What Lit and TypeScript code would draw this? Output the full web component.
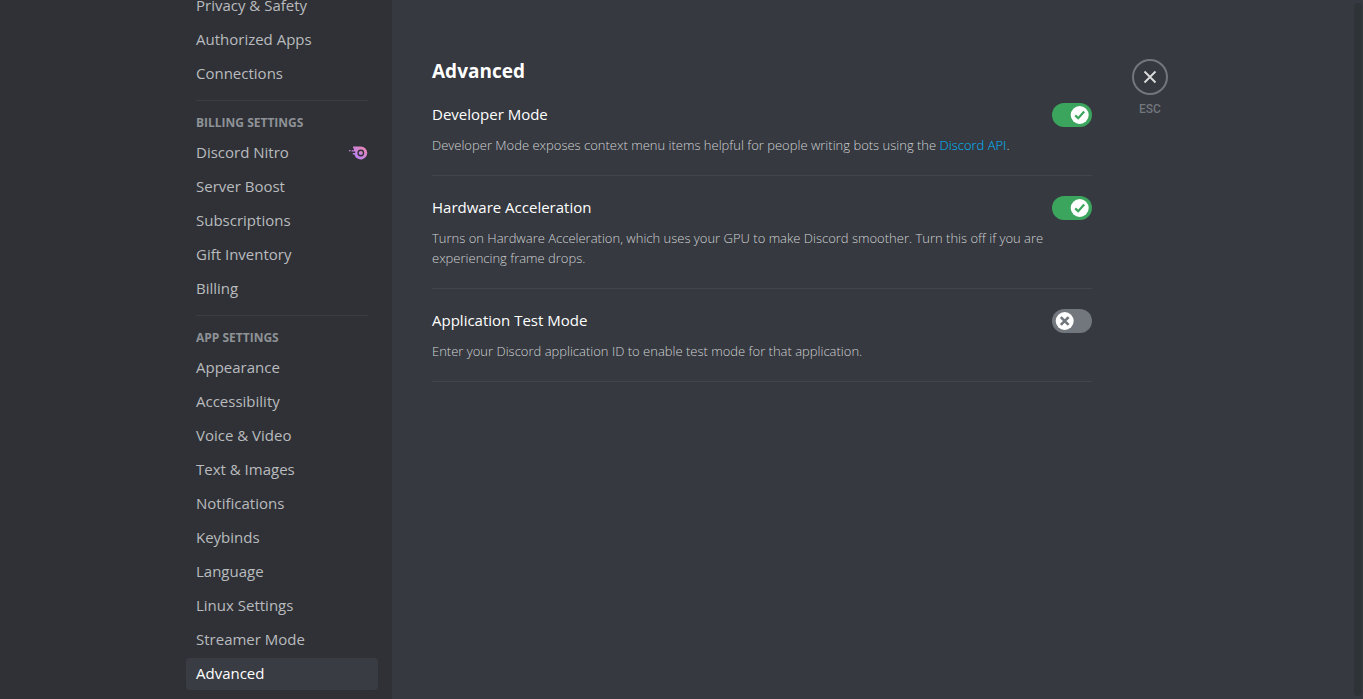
import { LitElement, html, css, svg, nothing } from "lit";
import { customElement, property, state } from "lit/decorators.js";

interface NavGroup {
  title?: string;
  items: string[];
}

interface Setting {
  id: string;
  title: string;
  note: unknown;
  on: boolean;
}

const NAV: NavGroup[] = [
  { items: ["Privacy & Safety", "Authorized Apps", "Connections"] },
  {
    title: "Billing Settings",
    items: ["Discord Nitro", "Server Boost", "Subscriptions", "Gift Inventory", "Billing"],
  },
  {
    title: "App Settings",
    items: [
      "Appearance",
      "Accessibility",
      "Voice & Video",
      "Text & Images",
      "Notifications",
      "Keybinds",
      "Language",
      "Linux Settings",
      "Streamer Mode",
      "Advanced",
    ],
  },
];

const nitroIcon = html`<svg width="19" height="16" viewBox="0 -2 19 16" aria-hidden="true">
  <defs>
    <linearGradient id="nitro" x1="0" y1="1" x2="1" y2="0">
      <stop offset="0.2" stop-color="#b980f0" />
      <stop offset="0.9" stop-color="#e885b4" />
    </linearGradient>
  </defs>
  <g fill="url(#nitro)">
    <path
      fill-rule="evenodd"
      d="M4 0.5H11.8A6.5 6.5 0 1 1 5.4 8.4H3.8V7H6.2V5.6H2.6V4.2H5V2.4H4ZM11.8 3.6A3.4 3.4 0 1 0 11.8 10.4A3.4 3.4 0 1 0 11.8 3.6Z"
    />
    <circle cx="11.8" cy="7" r="2.1" />
    <rect x="0" y="4" width="1.4" height="1.4" />
  </g>
</svg>`;

@customElement("toggle-switch")
export class ToggleSwitch extends LitElement {
  @property({ type: Boolean }) checked = false;
  @property() label = "";

  static styles = css`
    :host {
      display: block;
      flex: none;
    }
    .switch {
      display: grid;
      width: 40px;
      height: 24px;
      cursor: pointer;
    }
    .track,
    .knob {
      grid-area: 1 / 1;
    }
    .track {
      appearance: none;
      width: 40px;
      height: 24px;
      margin: 0;
      border-radius: 12px;
      background: #72767d;
      cursor: pointer;
    }
    .track:checked {
      background: #3ba55d;
    }
    .track:focus-visible {
      outline: 2px solid #00aff4;
      outline-offset: 2px;
    }
    .knob {
      z-index: 1;
      width: 20px;
      height: 20px;
      align-self: center;
      margin-left: 3px;
      pointer-events: none;
      color: #72767d;
    }
    .track:checked + .knob {
      margin-left: 18px;
      color: #3ba55d;
    }
  `;

  private toggle(e: Event) {
    this.checked = (e.target as HTMLInputElement).checked;
  }

  render() {
    return html`<label class="switch">
      <input
        class="track"
        type="checkbox"
        role="switch"
        aria-label=${this.label}
        .checked=${this.checked}
        @change=${this.toggle}
      />
      <svg class="knob" viewBox="0 0 20 20" aria-hidden="true">
        <circle cx="9.7" cy="10" r="9" fill="#fff" />
        ${this.checked
          ? svg`<path d="M5.2 10.4L8.2 13.2L14.2 6.6" fill="none" stroke="currentColor" stroke-width="2.2" />`
          : svg`<path d="M5.8 6.1L13.6 13.9M13.6 6.1L5.8 13.9" fill="none" stroke="currentColor" stroke-width="2.6" />`}
      </svg>
    </label>`;
  }
}

@customElement("app-root")
export class AppRoot extends LitElement {
  @state() private selected = "Advanced";

  private settings: Setting[] = [
    {
      id: "developer",
      title: "Developer Mode",
      note: html`Developer Mode exposes context menu items helpful for people writing bots using the
        <a class="link" href="#api">Discord API</a>.`,
      on: true,
    },
    {
      id: "hardware",
      title: "Hardware Acceleration",
      note: "Turns on Hardware Acceleration, which uses your GPU to make Discord smoother. Turn this off if you are experiencing frame drops.",
      on: true,
    },
    {
      id: "test",
      title: "Application Test Mode",
      note: "Enter your Discord application ID to enable test mode for that application.",
      on: false,
    },
  ];

  static styles = css`
    :host {
      display: grid;
      grid-template-columns: minmax(218px, 392fr) minmax(0, 971fr);
      height: 100vh;
      overflow: hidden;
      background: #36393f;
      color: #fff;
      font-family: "Open Sans", "Noto Sans", sans-serif;
      font-size: 15px;
      line-height: 20px;
    }
    .sidebar {
      display: flex;
      flex-direction: column;
      justify-content: flex-end;
      align-items: flex-end;
      box-sizing: border-box;
      min-height: 0;
      overflow: hidden;
      padding: 0 14px 9px;
      background: #2f3136;
    }
    .group {
      display: flex;
      flex: none;
      flex-direction: column;
      gap: 2px;
      width: 192px;
    }
    .group + .group::before {
      content: "";
      height: 1px;
      margin: 10px 10px 6px;
      background: #3b3d43;
    }
    .heading {
      margin: 0 0 -2px;
      padding: 6px 10px;
      color: #8e9297;
      font-size: 12px;
      font-weight: 700;
      line-height: 16px;
      text-transform: uppercase;
    }
    .item {
      display: flex;
      align-items: center;
      justify-content: space-between;
      padding: 5px 10px 7px;
      border: 0;
      border-radius: 4px;
      background: none;
      color: #b9bbbe;
      font: inherit;
      text-align: left;
      cursor: pointer;
    }
    .item[aria-current="page"] {
      background: #393c43;
      color: #fff;
    }
    .content {
      display: flex;
      align-items: flex-start;
      justify-content: space-between;
      min-width: 0;
    }
    .page {
      flex: 0 1 660px;
      min-width: 0;
      padding: 59px 40px 80px;
    }
    .title {
      margin: 0 0 20px;
      font-size: 19px;
      font-weight: 700;
      line-height: 24px;
    }
    .setting {
      padding-bottom: 20px;
      margin-bottom: 20px;
      border-bottom: 1px solid #42454b;
    }
    .row {
      display: flex;
      justify-content: space-between;
    }
    .name {
      margin: 0;
      font-size: 15px;
      font-weight: 400;
      line-height: 22px;
    }
    .note {
      margin: 8px 0 0;
      max-width: 620px;
      color: #cfd1d4;
      font-size: 13px;
      font-weight: 300;
    }
    .link {
      color: #00bcff;
      text-decoration: none;
    }
    .tools {
      flex: none;
      margin-right: auto;
      padding-top: 59px;
    }
    .close {
      display: grid;
      justify-items: center;
      gap: 4px;
      padding: 0;
      border: 0;
      background: none;
      color: #72767d;
      font: inherit;
      font-family: Roboto, sans-serif;
      font-size: 12px;
      font-weight: 500;
      cursor: pointer;
    }
    .scrollbar {
      align-self: stretch;
      width: 8px;
      margin: 3px 1px 3px 0;
      border-radius: 4px;
      background: #2e3338;
    }
  `;

  render() {
    return html`
      <nav class="sidebar" aria-label="User settings">
        ${NAV.map(
          (g) => html`<div class="group">
            ${g.title ? html`<h2 class="heading">${g.title}</h2>` : nothing}
            ${g.items.map(
              (name) => html`<button
                class="item"
                type="button"
                aria-current=${name === this.selected ? "page" : "false"}
                @click=${() => (this.selected = name)}
              >
                <span>${name}</span>${name === "Discord Nitro" ? nitroIcon : nothing}
              </button>`,
            )}
          </div>`,
        )}
      </nav>
      <div class="content">
        <main class="page">
          <h1 class="title">Advanced</h1>
          ${this.settings.map(
            (s) => html`<section class="setting">
              <div class="row">
                <h2 class="name">${s.title}</h2>
                <toggle-switch .label=${s.title} .checked=${s.on}></toggle-switch>
              </div>
              <p class="note">${s.note}</p>
            </section>`,
          )}
        </main>
        <div class="tools">
          <button class="close" type="button">
            <svg width="36" height="36" viewBox="0 0 36 36" fill="none" aria-hidden="true">
              <circle cx="18" cy="18" r="17" stroke="#72767d" stroke-width="2" />
              <path d="M12.5 12.5L23.5 23.5M23.5 12.5L12.5 23.5" stroke="#dcddde" stroke-width="1.8" />
            </svg>
            <span>ESC</span>
          </button>
        </div>
        <div class="scrollbar"></div>
      </div>
    `;
  }
}
